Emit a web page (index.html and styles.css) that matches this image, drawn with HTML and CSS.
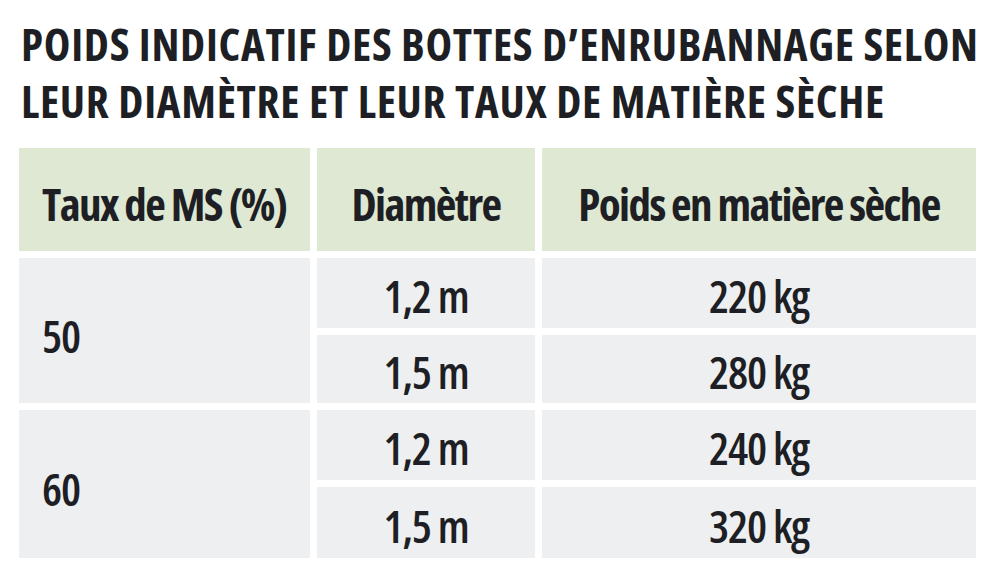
FILE: index.html
```html
<!DOCTYPE html>
<html lang="fr">
<head>
<meta charset="utf-8">
<title>Poids indicatif des bottes d’enrubannage</title>
<link rel="stylesheet" href="styles.css">
</head>
<body>
<main class="page">
  <h1 class="title">POIDS INDICATIF DES BOTTES D’ENRUBANNAGE SELON<br>LEUR DIAMÈTRE ET LEUR TAUX DE MATIÈRE SÈCHE</h1>
  <div class="table">
    <div class="cell head left">Taux de MS (%)</div>
    <div class="cell head">Diamètre</div>
    <div class="cell head">Poids en matière sèche</div>

    <div class="cell body left span">50</div>
    <div class="cell body">1,2 m</div>
    <div class="cell body">220 kg</div>
    <div class="cell body">1,5 m</div>
    <div class="cell body">280 kg</div>

    <div class="cell body left span">60</div>
    <div class="cell body">1,2 m</div>
    <div class="cell body">240 kg</div>
    <div class="cell body">1,5 m</div>
    <div class="cell body">320 kg</div>
  </div>
</main>
</body>
</html>
```
FILE: styles.css
```css
html, body {
  margin: 0;
  padding: 0;
  background: #ffffff;
}

.page {
  width: 989px;
  height: 576px;
  padding: 15px 0 0 19px;
  box-sizing: border-box;
  font-family: "Open Sans", "Roboto", "Liberation Sans", sans-serif;
  font-stretch: 75%;
  color: #1d1f24;
}

.title {
  margin: 0 0 19px 2px;
  font-size: 45px;
  line-height: 57px;
  font-weight: 700;
  letter-spacing: 0.7px;
  white-space: nowrap;
}

.table {
  display: grid;
  grid-template-columns: 291px 218px 434px;
  grid-template-rows: 103px 70px 68px 70px 71px;
  gap: 7px;
}

.cell {
  display: flex;
  align-items: center;
  justify-content: center;
  font-size: 45px;
  box-sizing: border-box;
}

.head {
  background: #dee8d2;
  font-weight: 700;
  letter-spacing: -1.6px;
  padding-top: 7px;
}

.body {
  background: #eeeff1;
  font-weight: 550;
  letter-spacing: -1.2px;
  padding-top: 5px;
}

.left {
  justify-content: flex-start;
  padding-left: 23px;
}

.span {
  grid-row: span 2;
  padding-top: 9px;
}
```
